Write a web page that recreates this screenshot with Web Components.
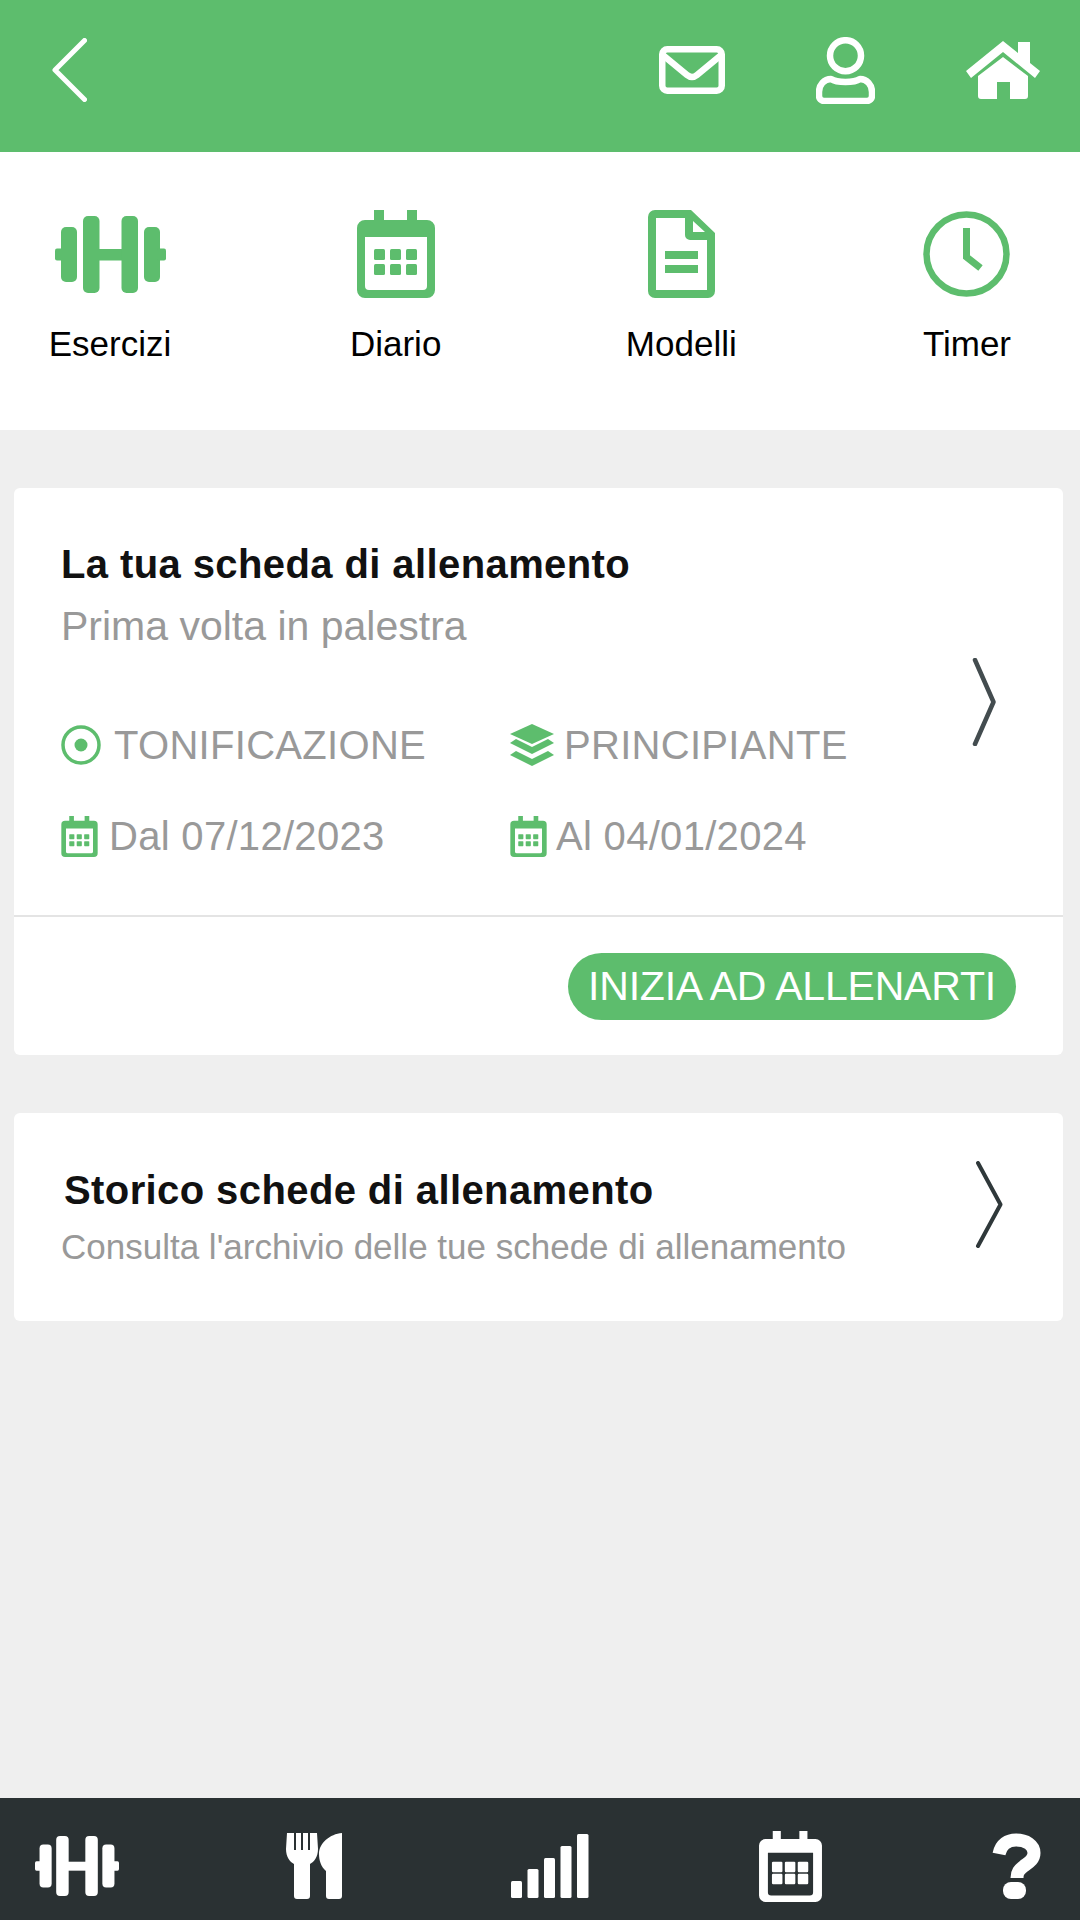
<!DOCTYPE html>
<html lang="it"><head><meta charset="utf-8"><title>Allenamento</title>
<style>
html,body{margin:0;padding:0}
body{width:1080px;height:1920px;overflow:hidden;display:flex;flex-direction:column;background:#efefef;font-family:"Liberation Sans",Arial,sans-serif}
main-area{flex:1}
</style></head><body>
<top-bar></top-bar>
<quick-nav>
  <nav-item icon="dumbbell" label="Esercizi"></nav-item>
  <nav-item icon="calendar" label="Diario"></nav-item>
  <nav-item icon="doc" label="Modelli"></nav-item>
  <nav-item icon="clock" label="Timer"></nav-item>
</quick-nav>
<main-area>
  <plan-card>
    <span slot="title">La tua scheda di allenamento</span>
    <span slot="sub">Prima volta in palestra</span>
    <meta-item icon="target" gap="13" slot="meta">TONIFICAZIONE</meta-item>
    <meta-item icon="layers" gap="10" slot="meta">PRINCIPIANTE</meta-item>
    <meta-item icon="calsmall" gap="11" slot="meta">Dal 07/12/2023</meta-item>
    <meta-item icon="calsmall" gap="9" slot="meta">Al 04/01/2024</meta-item>
    <span slot="action">INIZIA AD ALLENARTI</span>
  </plan-card>
  <history-card>
    <span slot="title">Storico schede di allenamento</span>
    <span slot="sub">Consulta l'archivio delle tue schede di allenamento</span>
  </history-card>
</main-area>
<bottom-bar>
  <app-icon name="dumbbell-w" style="margin-left:-2px"></app-icon>
  <app-icon name="food" style="margin-left:-2px"></app-icon>
  <app-icon name="bars"></app-icon>
  <app-icon name="calendar-w"></app-icon>
  <app-icon name="help"></app-icon>
</bottom-bar>
<script>
const G='#5dbd6d';
const dumb=(c,w,h)=>`<svg width="${w}" height="${h}" viewBox="0 0 111 77" preserveAspectRatio="none" fill="${c}"><rect x="0" y="32.500" width="9" height="12" rx="2"/><rect x="6" y="11" width="16" height="55" rx="5"/><rect x="28" y="0" width="16.500" height="77" rx="5"/><rect x="43" y="33" width="25" height="11.500"/><rect x="66.500" y="0" width="16.500" height="77" rx="5"/><rect x="89" y="11" width="16" height="55" rx="5"/><rect x="102" y="32.500" width="9" height="12" rx="2"/></svg>`;
const cal=(c,w,h,t,q)=>`<svg width="${w}" height="${h}" viewBox="0 0 78 88"><path fill="${c}" fill-rule="evenodd" d="M17 0h10v10h23V0h10v10h10a8 8 0 0 1 8 8v62a8 8 0 0 1-8 8H8a8 8 0 0 1-8-8V18a8 8 0 0 1 8-8h9zM${t} 27v49a4 4 0 0 0 4 4h${70-2*t}a4 4 0 0 0 4-4V27z"/><g fill="${c}">${[39,54].map(y=>[17,33,49].map(x=>`<rect x="${x-(q-11)/2}" y="${y-(q-11)/2}" width="${q}" height="${q}" rx="1.500"/>`).join('')).join('')}</g></svg>`;
const ICONS={
 back:`<svg width="35" height="64" viewBox="0 0 35 64" fill="none" stroke="#fff" stroke-width="5" stroke-linecap="round" stroke-linejoin="round"><path d="M32.500 2.500 3 32 32.500 61.500"/></svg>`,
 mail:`<svg width="66" height="48" viewBox="0 0 66 48" fill="none" stroke="#fff" stroke-width="6.500" stroke-linejoin="round" stroke-linecap="round"><rect x="3.250" y="3.250" width="59.500" height="41.500" rx="5"/><path d="M5 10 28 29q5 4 10 0L61 10"/></svg>`,
 user:`<svg width="59" height="67" viewBox="0 0 59 67" fill="none" stroke="#fff" stroke-width="6.500" stroke-linejoin="round"><circle cx="29.500" cy="18.700" r="15.500"/><path d="M15 42c6 4 23 4 29 0 7 0 12 6 12 13v4a5 5 0 0 1-5 5H8a5 5 0 0 1-5-5v-4C3 48 8 42 15 42z"/></svg>`,
 home:`<svg width="75" height="58" viewBox="0 0 75 58" fill="#fff"><path d="M37 0 52 12V1h12v21l10 8-5 7-32-26L5 37l-5-7z"/><path d="M37 16 62 35v20a3 3 0 0 1-3 3H44V41H31v17H15a3 3 0 0 1-3-3V35z"/></svg>`,
 dumbbell:dumb(G,111,77),
 'dumbbell-w':dumb('#fff',84,60),
 calendar:cal(G,78,88,8,11),
 'calendar-w':cal('#fff',65,71,11,13),
 calsmall:cal(G,37,41,10,11),
 doc:`<svg width="67" height="88" viewBox="0 0 67 88"><path fill="${G}" fill-rule="evenodd" d="M7 0h36l24 23v58a7 7 0 0 1-7 7H7a7 7 0 0 1-7-7V7a7 7 0 0 1 7-7zm1 8v72h51V30H42a5 5 0 0 1-5-5V8zm37 3v11h12z"/><rect x="17" y="41" width="33" height="8" fill="${G}"/><rect x="17" y="55" width="33" height="8" fill="${G}"/></svg>`,
 clock:`<svg width="87" height="86" viewBox="0 0 87 86" fill="none" stroke="${G}"><ellipse cx="43.500" cy="43" rx="40" ry="39.500" stroke-width="6.500"/><path d="M43.500 17v29l14 11" stroke-width="7"/></svg>`,
 target:`<svg width="40" height="40" viewBox="0 0 40 40"><circle cx="20" cy="20" r="18" fill="none" stroke="${G}" stroke-width="3.500"/><circle cx="20" cy="20" r="6.500" fill="${G}"/></svg>`,
 layers:`<svg width="44" height="42" viewBox="0 0 44 42" fill="${G}"><path d="M22 0 44 10 22 20 0 10z"/><path d="M6 15l16 8 16-8 6 4-22 11L0 19z"/><path d="M6 27l16 8 16-8 6 4-22 11L0 31z"/></svg>`,
 chev1:`<svg width="24" height="88" viewBox="0 0 24 88" fill="none" stroke="#434c4f" stroke-width="4.500" stroke-linecap="round" stroke-linejoin="round"><path d="M3 2 21.500 44 3 86"/></svg>`,
 chev2:`<svg width="28" height="87" viewBox="0 0 28 87" fill="none" stroke="#2f383a" stroke-width="4" stroke-linecap="round" stroke-linejoin="round"><path d="M3 2 25.500 43.500 3 85"/></svg>`,
 food:`<svg width="56" height="66" viewBox="0 0 56 66" fill="#fff"><path fill-rule="evenodd" d="M1 0h30l1 16c0 8-4 13-8 15v32a3 3 0 0 1-3 3H11a3 3 0 0 1-3-3V31C4 29 0 24 0 16zM8 0v17h2V0zM15 0v17h2V0zM22 0v17h2V0z"/><path d="M56 0v63a3 3 0 0 1-3 3H43a3 3 0 0 1-3-3V38c-5-4-7-11-7-17C33 10 44 1 56 0z"/></svg>`,
 bars:`<svg width="78" height="64" viewBox="0 0 78 64" fill="#fff"><rect x="0" y="47" width="11" height="17" rx="1.500"/><rect x="16.500" y="35" width="11" height="29" rx="1.500"/><rect x="33" y="24" width="11" height="40" rx="1.500"/><rect x="49.500" y="12" width="11" height="52" rx="1.500"/><rect x="66" y="0" width="11.500" height="64" rx="1.500"/></svg>`,
 help:`<svg width="49" height="66" viewBox="0 0 49 66"><path d="M7 21C9 11 16 7 24 7c10 0 18 5 18 13 0 7-6 10-10 13-5 4-7 6-7 12" fill="none" stroke="#fff" stroke-width="13"/><rect x="11" y="49" width="23" height="17" rx="8" fill="#fff"/></svg>`
};
function def(name,css,html){
  customElements.define(name,class extends HTMLElement{
    constructor(){super();this.attachShadow({mode:'open'});}
    connectedCallback(){this.shadowRoot.innerHTML=`<style>${css}</style>${typeof html==='function'?html(this):html}`;}
  });
}
def('app-icon',':host{display:inline-flex;line-height:0;flex:none}',el=>ICONS[el.getAttribute('name')]||'');
def('top-bar',`:host{display:flex;align-items:center;box-sizing:border-box;height:152px;padding:0 39px 12px 52px;background:${G};gap:91px}
 .back{margin-right:auto}`,`<app-icon class="back" name="back"></app-icon><app-icon name="mail"></app-icon><app-icon name="user"></app-icon><app-icon name="home"></app-icon>`);
def('quick-nav',`:host{display:flex;justify-content:space-between;box-sizing:border-box;height:278px;padding:58px 3px 0 0;background:#fff}`,`<slot></slot>`);
def('nav-item',`:host{display:flex;flex-direction:column;align-items:center;width:220px;color:#000;font-size:35px;line-height:40px}
 .i{height:88px;display:flex;align-items:center}.l{margin-top:26px}`,el=>`<div class="i"><app-icon name="${el.getAttribute('icon')}"></app-icon></div><div class="l">${el.getAttribute('label')}</div>`);
def('main-area',`:host{display:flex;flex-direction:column;gap:58px;padding:58px 17px 0 14px}`,`<slot></slot>`);
def('plan-card',`:host{display:block;background:#fff;border-radius:6px;height:567px;box-sizing:border-box}
 .top{display:flex;height:427px;box-sizing:border-box;padding:51px 67px 0 47px}
 .body{flex:1}
 .t{font:bold 40px/50px "Liberation Sans",Arial,sans-serif;color:#111;letter-spacing:.4px}
 .s{font-size:41px;line-height:50px;color:#999;margin-top:12px}
 .m{display:grid;grid-template-columns:449px 1fr;row-gap:41px;margin-top:69px;letter-spacing:.3px}
 .c{align-self:center;margin-top:-50px}
 .bot{display:flex;align-items:center;justify-content:flex-end;height:138px;border-top:2px solid #e4e4e4;padding-right:47px}
 .b{box-sizing:border-box;width:448px;height:67px;border-radius:34px;background:${G};color:#fff;font-size:41px;line-height:67px;text-align:center;white-space:nowrap;letter-spacing:-.2px}`,
 `<div class="top"><div class="body"><div class="t"><slot name="title"></slot></div><div class="s"><slot name="sub"></slot></div><div class="m"><slot name="meta"></slot></div></div><app-icon class="c" name="chev1"></app-icon></div>
 <div class="bot"><div class="b"><slot name="action"></slot></div></div>`);
def('meta-item',`:host{display:flex;align-items:center;height:50px;font-size:40px;color:#999;white-space:nowrap}`,
 el=>`<app-icon name="${el.getAttribute('icon')}" style="margin-right:${el.getAttribute('gap')}px"></app-icon><slot></slot>`);
def('history-card',`:host{display:flex;background:#fff;border-radius:6px;height:208px;box-sizing:border-box;padding:52px 60px 0 47px}
 .body{flex:1}
 .t{font:bold 40px/50px "Liberation Sans",Arial,sans-serif;color:#111;letter-spacing:.4px;margin-left:3px}
 .s{font-size:35px;line-height:50px;color:#999;margin-top:7px}
 .c{align-self:flex-start;margin-top:-4px}`,
 `<div class="body"><div class="t"><slot name="title"></slot></div><div class="s"><slot name="sub"></slot></div></div><app-icon class="c" name="chev2"></app-icon>`);
def('bottom-bar',`:host{display:flex;justify-content:space-between;align-items:center;box-sizing:border-box;height:122px;padding:14px 39px 0 37px;background:#2a3133}`,`<slot></slot>`);
</script>
</body></html>
